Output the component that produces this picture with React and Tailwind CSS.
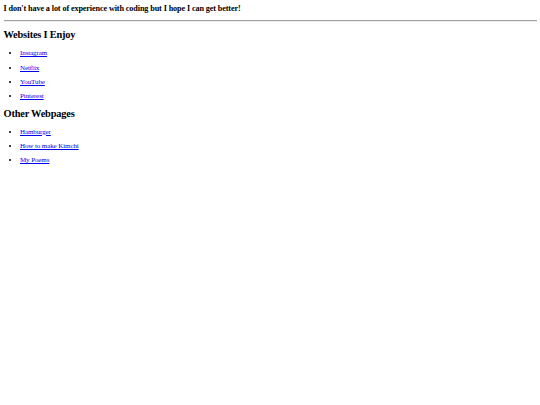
export default function App() {
  const enjoy = ["Instagram", "Netflix", "YouTube", "Pinterest"];
  const other = ["Hamburger", "How to make Kimchi", "My Poems"];
  return (
    <div className="min-h-[405px] bg-white px-[3.5px] text-black" style={{ fontFamily: '"Liberation Serif", "Times New Roman", serif' }}>
      <h3 className="pt-[2.5px] text-[8.2px] font-bold leading-[11px] tracking-[-0.12px]">
        I don't have a lot of experience with coding but I hope I can get better!
      </h3>
      <div className="mt-[6px] h-[2px] border-t border-t-[#a0a0a0] border-b border-b-[#eeeeee]"></div>
      <h2 className="mt-[6.5px] text-[10.4px] font-bold leading-[14px] tracking-[-0.2px]">Websites I Enjoy</h2>
      <ul className="mt-[4.2px] list-disc pl-[16.5px]">
        {enjoy.map((t) => (
          <li key={t} className="text-[7px] leading-[14.4px] tracking-[-0.1px]">
            <a href="#" className="text-[#0000ee] underline">{t}</a>
          </li>
        ))}
      </ul>
      <h2 className="mt-[3.6px] text-[10.4px] font-bold leading-[14px] tracking-[-0.2px]">Other Webpages</h2>
      <ul className="mt-[3.2px] list-disc pl-[16.5px]">
        {other.map((t) => (
          <li key={t} className="text-[7px] leading-[14.4px] tracking-[-0.1px]">
            <a href="#" className="text-[#0000ee] underline">{t}</a>
          </li>
        ))}
      </ul>
    </div>
  );
}
